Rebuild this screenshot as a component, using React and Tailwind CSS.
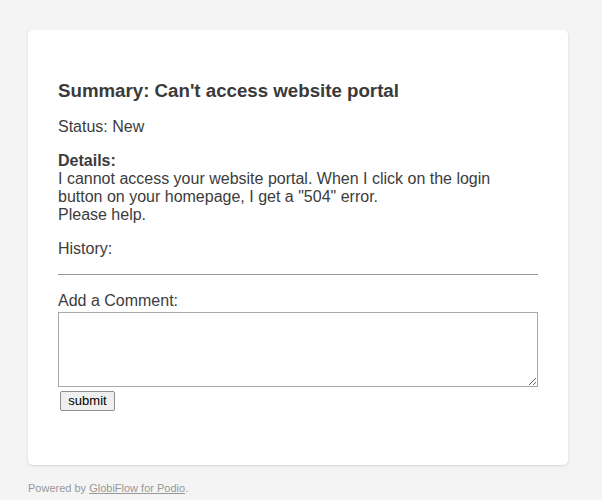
export default function App() {
  return (
    <div className="min-h-[500px] bg-[#f4f4f4] px-[28px] pt-[30px] pb-4 font-['Liberation_Sans',Arial,sans-serif] text-[#3c3c3c]">
      <div className="w-[540px] rounded-[5px] bg-white px-[30px] pt-[50px] pb-[53px] shadow-[0_1px_3px_rgba(0,0,0,0.12)]">
        <h2 className="text-[18.7px] leading-[22px] font-bold text-[#3a3a3a]">Summary: Can't access website portal</h2>
        <p className="mt-[16px] text-[16px] leading-[18px]">Status: New</p>
        <div className="mt-[16px] text-[16px] leading-[18px]">
          <b className="font-bold">Details:</b>
          <br />
          I cannot access your website portal. When I click on the login button on your homepage, I get a "504" error.
          <br />
          Please help.
        </div>
        <p className="mt-[16px] text-[16px] leading-[18px]">History:</p>
        <hr className="mt-[16px] border-0 border-t border-[#999]" />
        <p className="mt-[17px] text-[16px] leading-[18px]">Add a Comment:</p>
        <textarea className="mt-[2px] block h-[75px] w-[480px] border border-[#a9a9a9] bg-white" />
        <button className="mt-[4px] ml-[2px] h-[20px] w-[55px] rounded-[2px] border border-[#8f8f8f] bg-[#efefef] text-[13px] leading-[16px] text-black">
          submit
        </button>
      </div>
      <p className="mt-[17px] text-[11px] leading-[13px] text-[#999]">
        Powered by <span className="underline">GlobiFlow for Podio</span>.
      </p>
    </div>
  );
}
